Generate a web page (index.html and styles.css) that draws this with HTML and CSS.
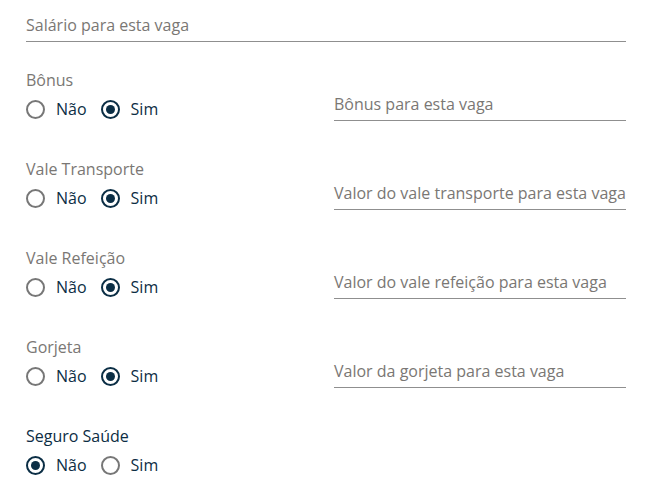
FILE: index.html
```html
<!DOCTYPE html>
<html lang="pt">
<head>
<meta charset="utf-8">
<link rel="stylesheet" href="styles.css">
</head>
<body>
<form class="form">
  <div class="field">
    <span class="placeholder">Salário para esta vaga</span>
  </div>

  <div class="rows">
    <div class="row">
      <div class="choice">
        <div class="label">Bônus</div>
        <div class="radios">
          <span class="radio"><span class="dot"></span>Não</span>
          <span class="radio on"><span class="dot"></span>Sim</span>
        </div>
      </div>
      <div class="field"><span class="placeholder">Bônus para esta vaga</span></div>
    </div>

    <div class="row">
      <div class="choice">
        <div class="label">Vale Transporte</div>
        <div class="radios">
          <span class="radio"><span class="dot"></span>Não</span>
          <span class="radio on"><span class="dot"></span>Sim</span>
        </div>
      </div>
      <div class="field"><span class="placeholder">Valor do vale transporte para esta vaga</span></div>
    </div>

    <div class="row">
      <div class="choice">
        <div class="label">Vale Refeição</div>
        <div class="radios">
          <span class="radio"><span class="dot"></span>Não</span>
          <span class="radio on"><span class="dot"></span>Sim</span>
        </div>
      </div>
      <div class="field"><span class="placeholder">Valor do vale refeição para esta vaga</span></div>
    </div>

    <div class="row">
      <div class="choice">
        <div class="label">Gorjeta</div>
        <div class="radios">
          <span class="radio"><span class="dot"></span>Não</span>
          <span class="radio on"><span class="dot"></span>Sim</span>
        </div>
      </div>
      <div class="field"><span class="placeholder">Valor da gorjeta para esta vaga</span></div>
    </div>

    <div class="row">
      <div class="choice">
        <div class="label label-dark">Seguro Saúde</div>
        <div class="radios">
          <span class="radio on"><span class="dot"></span>Não</span>
          <span class="radio"><span class="dot"></span>Sim</span>
        </div>
      </div>
    </div>
  </div>
</form>
</body>
</html>
```
FILE: styles.css
```css
html, body {
  margin: 0;
  padding: 0;
  background: #ffffff;
}
body {
  font-family: "Open Sans", "Liberation Sans", sans-serif;
  font-size: 16px;
  color: #0c2d44;
}
.form {
  padding: 14px 40px 0 26px;
}
.field {
  border-bottom: 1px solid #8f8f8f;
  height: 27px;
}
.placeholder {
  display: block;
  color: #7a7774;
  line-height: 22px;
  white-space: nowrap;
}
.rows {
  margin-top: 27px;
  display: flex;
  flex-direction: column;
  gap: 37px;
}
.row {
  display: grid;
  grid-template-columns: 1fr 1fr;
  column-gap: 16px;
  align-items: end;
}
.choice {
  padding-bottom: 2px;
}
.label {
  color: #7a7774;
  line-height: 22px;
  margin-bottom: 8px;
}
.label-dark {
  color: #0c2d44;
}
.radios {
  display: flex;
  align-items: center;
  gap: 14px;
  height: 20px;
}
.radio {
  display: flex;
  align-items: center;
  gap: 11px;
  color: #0c2d44;
  line-height: 20px;
}
.dot {
  width: 19px;
  height: 19px;
  box-sizing: border-box;
  border: 2px solid #777777;
  border-radius: 50%;
  position: relative;
  flex: none;
}
.radio.on .dot {
  border: 2.5px solid #0b2e45;
}
.radio.on .dot::after {
  content: "";
  position: absolute;
  left: 50%;
  top: 50%;
  width: 9px;
  height: 9px;
  margin: -4.5px 0 0 -4.5px;
  border-radius: 50%;
  background: #0b2e45;
}
```
